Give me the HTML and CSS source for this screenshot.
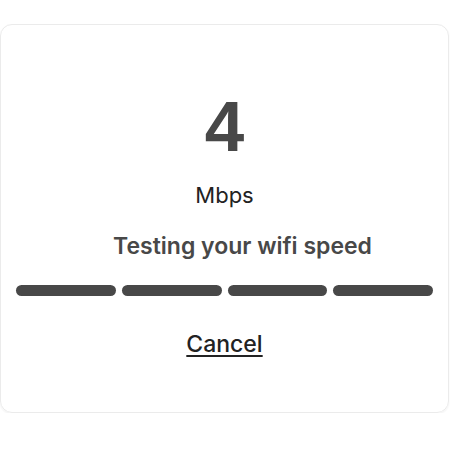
FILE: index.html
```html
<!DOCTYPE html>
<html lang="en">
<head>
    <meta charset="UTF-8">
    <meta name="viewport" content="width=device-width, initial-scale=1.0">
    <title>Wifi speed test</title>
    <link rel="stylesheet" href="styles.css">
</head>
<body>

    <div class="card">
        <div class="speed">4</div>
        <div class="unit">Mbps</div>
        <div class="status">Testing your wifi speed</div>

        <div class="progress">
            <span class="segment"></span>
            <span class="segment"></span>
            <span class="segment"></span>
            <span class="segment"></span>
        </div>

        <a href="#" class="cancel">Cancel</a>
    </div>

</body>
</html>
```

FILE: styles.css
```css
body {
    font-family: Inter, "Liberation Sans", sans-serif;
    background-color: #ffffff;
    margin: 0;
    padding: 0;
}
.card {
    box-sizing: border-box;
    width: 449px;
    height: 389px;
    margin-top: 24px;
    border: 1px solid #ebebeb;
    border-radius: 12px;
    box-shadow: 0 1px 2px rgba(0, 0, 0, 0.06);
    display: flex;
    flex-direction: column;
    align-items: center;
    padding: 0 15px;
}
.speed {
    margin-top: 67px;
    font-family: "Liberation Sans", Arial, sans-serif;
    font-size: 71px;
    font-weight: bold;
    line-height: 70px;
    color: #484848;
}
.unit {
    margin-top: 20px;
    font-size: 22px;
    line-height: 26px;
    color: #222222;
}
.status {
    margin-top: 24px;
    padding-left: 36px;
    font-size: 23px;
    font-weight: 600;
    line-height: 28px;
    color: #484848;
}
.progress {
    align-self: stretch;
    display: flex;
    gap: 6px;
    margin-top: 25px;
}
.segment {
    flex: 1;
    height: 11px;
    border-radius: 6px;
    background-color: #484848;
}
.cancel {
    margin-top: 34px;
    font-size: 23px;
    font-weight: 500;
    color: #222222;
    text-decoration: underline;
    text-underline-offset: 3px;
}
```
